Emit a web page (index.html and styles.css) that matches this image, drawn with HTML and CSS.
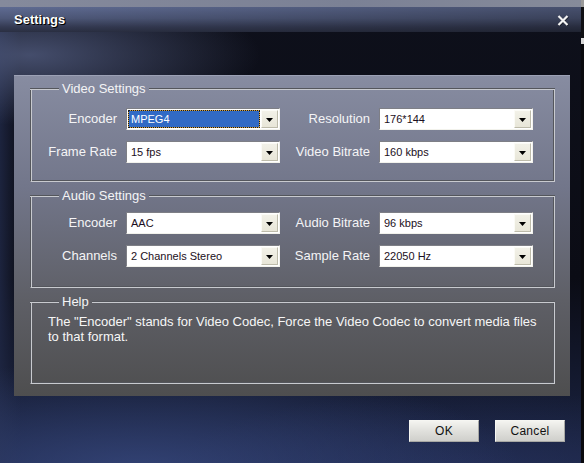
FILE: index.html
```html
<!DOCTYPE html>
<html>
<head>
<meta charset="utf-8">
<title>Settings</title>
<link rel="stylesheet" href="styles.css">
</head>
<body>
<div class="window">
  <div class="main">
    <div class="topstrip"></div>
    <div class="titlebar">
      <span class="title">Settings</span>
      <svg class="close" width="12" height="11" viewBox="0 0 12 11">
        <path d="M1.5 1 L10.5 10 M10.5 1 L1.5 10" stroke="#000" stroke-opacity="0.5" stroke-width="2.4" transform="translate(0.6,0.6)"/>
        <path d="M1.5 1 L10.5 10 M10.5 1 L1.5 10" stroke="#f4f4f4" stroke-width="2.2"/>
      </svg>
    </div>
    <div class="content">
      <div class="panel">
        <div class="group group-video">
          <div class="group-head"><span class="seg seg-lead"></span><span class="legend">Video Settings</span><span class="seg seg-fill"></span></div>
          <div class="grid">
            <span class="label">Encoder</span>
            <div class="combo"><span class="val val-sel">MPEG4</span><span class="dd"></span></div>
            <span class="label">Resolution</span>
            <div class="combo"><span class="val">176*144</span><span class="dd"></span></div>
            <span class="label">Frame Rate</span>
            <div class="combo"><span class="val">15 fps</span><span class="dd"></span></div>
            <span class="label">Video Bitrate</span>
            <div class="combo"><span class="val">160 kbps</span><span class="dd"></span></div>
          </div>
        </div>
        <div class="group group-audio">
          <div class="group-head"><span class="seg seg-lead"></span><span class="legend">Audio Settings</span><span class="seg seg-fill"></span></div>
          <div class="grid">
            <span class="label">Encoder</span>
            <div class="combo"><span class="val">AAC</span><span class="dd"></span></div>
            <span class="label">Audio Bitrate</span>
            <div class="combo"><span class="val">96 kbps</span><span class="dd"></span></div>
            <span class="label">Channels</span>
            <div class="combo"><span class="val">2 Channels Stereo</span><span class="dd"></span></div>
            <span class="label">Sample Rate</span>
            <div class="combo"><span class="val">22050 Hz</span><span class="dd"></span></div>
          </div>
        </div>
        <div class="group group-help">
          <div class="group-head"><span class="seg seg-lead"></span><span class="legend">Help</span><span class="seg seg-fill"></span></div>
          <p class="help-text">The "Encoder" stands for Video Codec, Force the Video Codec to convert media files to that format.</p>
        </div>
      </div>
      <div class="footer">
        <button class="btn">OK</button>
        <button class="btn">Cancel</button>
      </div>
    </div>
  </div>
  <div class="edge"></div>
</div>
</body>
</html>
```

FILE: styles.css
```css
html, body {
  margin: 0;
  padding: 0;
}
body {
  width: 584px;
  height: 463px;
  overflow: hidden;
  background: #0b0c15;
  font-family: "Liberation Sans", Arial, sans-serif;
}
.window {
  display: flex;
  width: 584px;
  height: 463px;
}
.main {
  width: 581px;
  height: 463px;
  display: flex;
  flex-direction: column;
  background:
    radial-gradient(ellipse 230px 70px at 30px 55px, rgba(78, 88, 122, 0.85), rgba(78, 88, 122, 0) 100%),
    radial-gradient(ellipse 380px 110px at 140px 470px, rgba(58, 76, 132, 0.75), rgba(58, 76, 132, 0) 100%),
    radial-gradient(ellipse 300px 80px at 470px 470px, rgba(40, 52, 96, 0.6), rgba(40, 52, 96, 0) 100%),
    linear-gradient(90deg, rgba(30, 38, 66, 0.9) 0px, rgba(30, 38, 66, 0) 20px),
    linear-gradient(180deg, #0e101b 0%, #0b0c15 60%, #161d36 88%, #1b2444 100%);
}
.edge {
  width: 3px;
  height: 463px;
  background: linear-gradient(180deg, #9a9a9a 0px, #9a9a9a 7px, #101014 7px, #101014 38px, #d8d8d8 38px, #d8d8d8 44px, #0a0a0e 44px, #0a0a0e 100%);
}
.topstrip {
  height: 7px;
  background: linear-gradient(90deg, #858a9c, #7b8195 60%, #868b9a);
}
.titlebar {
  height: 25px;
  display: flex;
  align-items: center;
  justify-content: space-between;
  padding: 0 12px 0 14px;
  background:
    linear-gradient(90deg, rgba(0, 0, 0, 0) 0%, rgba(0, 0, 0, 0.25) 100%),
    linear-gradient(180deg, #5f6b92 0%, #4e5879 45%, #343a52 80%, #2a2f42 100%);
}
.title {
  color: #ffffff;
  font-weight: bold;
  font-size: 13px;
  line-height: 16px;
  text-shadow: 1px 1px 0 #000, 1px 0 0 #1a1a1a;
  margin-top: 1px;
}
.close {
  display: block;
  margin-top: 1px;
}
.content {
  flex: 1;
  display: flex;
  flex-direction: column;
}
.panel {
  margin: 43px 0 0 14px;
  width: 556px;
  height: 321px;
  box-sizing: border-box;
  padding: 13px 15px 0 16px;
  background: linear-gradient(180deg, #878ca1 0%, #72768a 35%, #5e5f66 70%, #4e4e4f 100%);
  border-top: 1px solid #9ca1b5;
  display: flex;
  flex-direction: column;
}
.group {
  box-sizing: border-box;
  border-style: solid;
  border-width: 0 1px 1px 1px;
  border-color: #54565c #c8cacf #c8cacf #54565c;
  box-shadow: inset 1px 0 0 #c8cacf, inset -1px -1px 0 #54565c;
}
.group-video {
  height: 94px;
  margin-top: -1px;
}
.group-audio {
  height: 93px;
  margin-top: 13px;
}
.group-help {
  height: 83px;
  margin-top: 13px;
}
.group-head {
  display: flex;
  align-items: center;
  height: 16px;
  margin: -7px -1px 0 -1px;
}
.seg {
  height: 0;
  border-top: 1px solid #54565c;
  border-bottom: 1px solid #c8cacf;
}
.seg-lead {
  width: 29px;
}
.seg-fill {
  flex: 1;
}
.legend {
  color: #f4f4f6;
  font-size: 13px;
  line-height: 16px;
  padding: 0 3px;
}
.grid {
  display: grid;
  grid-template-columns: 86px 154px 81px 154px;
  column-gap: 9px;
  row-gap: 11px;
  align-items: center;
}
.group-video .grid {
  margin-top: 11px;
}
.group-audio .grid {
  margin-top: 8px;
}
.label {
  text-align: right;
  color: #f4f4f6;
  font-size: 13px;
  line-height: 16px;
}
.combo {
  width: 154px;
  height: 22px;
  box-sizing: border-box;
  border: 1px solid;
  border-color: #7e7f86 #f2f2ec #f2f2ec #7e7f86;
  background: #ffffff;
  display: flex;
  align-items: stretch;
  padding: 1px 1px 1px 1px;
}
.val {
  flex: 1;
  font-size: 11px;
  line-height: 18px;
  color: #1c0f22;
  padding-left: 3px;
  white-space: nowrap;
  overflow: hidden;
}
.val-sel {
  color: #ffffff;
  border: 1px dotted #1a1a1a;
  line-height: 16px;
  padding-left: 2px;
  margin-right: 1px;
  background: linear-gradient(#316ac5, #316ac5) padding-box, #d4a040 border-box;
}
.dd {
  width: 17px;
  box-sizing: border-box;
  border: 1px solid;
  border-color: #fbfbf6 #bdbbaa #bdbbaa #fbfbf6;
  background: linear-gradient(180deg, #f2f1e8 0%, #e8e6d8 100%);
  display: flex;
  align-items: center;
  justify-content: center;
  padding-top: 2px;
}
.dd::after {
  content: "";
  width: 7px;
  height: 4px;
  background: #000;
  clip-path: polygon(0 0, 100% 0, 50% 100%);
}
.help-text {
  margin: 4px 0 0 0;
  padding: 0 10px 0 17px;
  color: #f6f6f6;
  font-size: 13px;
  line-height: 15px;
}
.footer {
  display: flex;
  justify-content: flex-end;
  gap: 16px;
  padding-right: 16px;
  margin-top: 24px;
}
.btn {
  width: 70px;
  height: 22px;
  margin: 0;
  padding: 0;
  box-sizing: border-box;
  border: 1px solid;
  border-color: #f6f6f2 #a8a8a4 #a8a8a4 #f6f6f2;
  background: linear-gradient(180deg, #f4f4f0 0%, #e2e2de 45%, #cfcfcb 100%);
  font-family: "Liberation Sans", Arial, sans-serif;
  font-size: 12px;
  color: #111111;
  letter-spacing: 0.3px;
}
```
